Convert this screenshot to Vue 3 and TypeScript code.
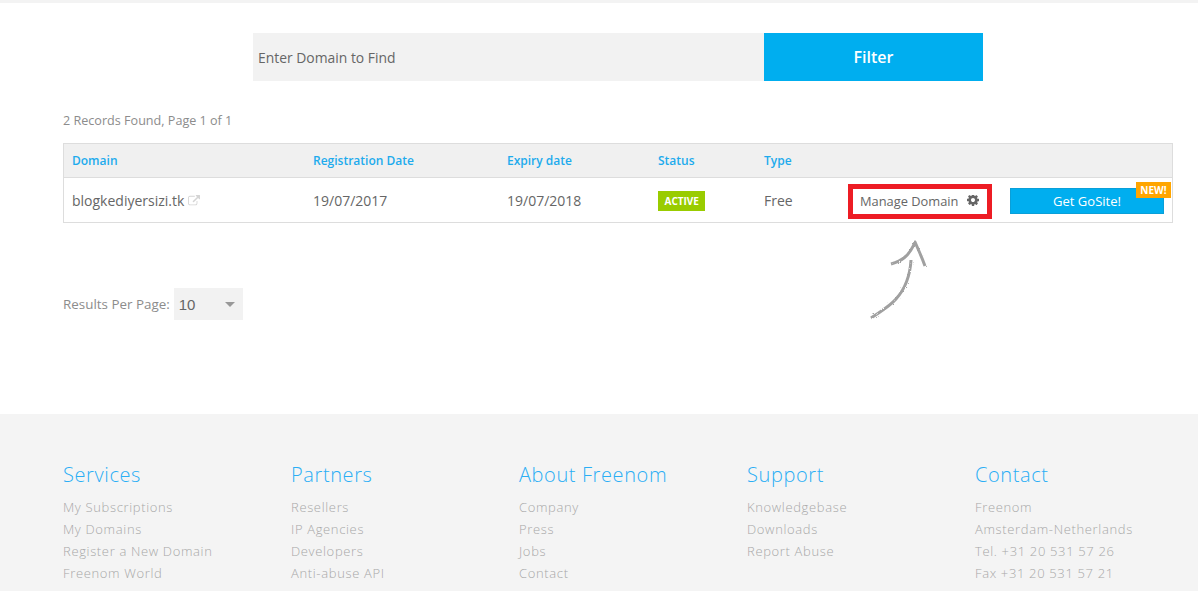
<script setup lang="ts">
interface FooterColumn { title: string; items: string[] }
const footer: FooterColumn[] = [
  { title: 'Services', items: ['My Subscriptions', 'My Domains', 'Register a New Domain', 'Freenom World'] },
  { title: 'Partners', items: ['Resellers', 'IP Agencies', 'Developers', 'Anti-abuse API'] },
  { title: 'About Freenom', items: ['Company', 'Press', 'Jobs', 'Contact'] },
  { title: 'Support', items: ['Knowledgebase', 'Downloads', 'Report Abuse'] },
  { title: 'Contact', items: ['Freenom', 'Amsterdam-Netherlands', 'Tel. +31 20 531 57 26', 'Fax +31 20 531 57 21'] },
]
const heads: string[] = ['Domain', 'Registration Date', 'Expiry date', 'Status', 'Type', '', '']
</script>

<template>
  <div class="page">
    <main class="main">
      <form class="search" @submit.prevent>
        <div class="search-input">Enter Domain to Find</div>
        <button class="search-btn" type="button">Filter</button>
      </form>
      <p class="records">2 Records Found, Page 1 of 1</p>
      <div class="table">
        <div class="row head">
          <div v-for="(h, i) in heads" :key="i" class="cell">{{ h }}</div>
        </div>
        <div class="row body">
          <div class="cell domain">
            blogkediyersizi.tk
            <svg class="ext" viewBox="0 0 1792 1792" aria-hidden="true"><path fill="#d4d4d4" d="M1408 928v320q0 119-84.5 203.5t-203.5 84.5h-832q-119 0-203.5-84.5t-84.5-203.5v-832q0-119 84.5-203.5t203.5-84.5h704q14 0 23 9t9 23v64q0 14-9 23t-23 9h-704q-66 0-113 47t-47 113v832q0 66 47 113t113 47h832q66 0 113-47t47-113v-320q0-14 9-23t23-9h64q14 0 23 9t9 23zm384-864v512q0 26-19 45t-45 19-45-19l-176-176-652 652q-10 10-23 10t-23-10l-114-114q-10-10-10-23t10-23l652-652-176-176q-19-19-19-45t19-45 45-19h512q26 0 45 19t19 45z"/></svg>
          </div>
          <div class="cell">19/07/2017</div>
          <div class="cell">19/07/2018</div>
          <div class="cell"><span class="active">ACTIVE</span></div>
          <div class="cell">Free</div>
          <div class="cell">
            <div class="manage">
              Manage Domain
              <svg class="gear" viewBox="0 0 1536 1536" aria-hidden="true"><path fill="#666" fill-rule="evenodd" d="M1024 640q0-106-75-181t-181-75-181 75-75 181 75 181 181 75 181-75 75-181zm512-109v222q0 12-8 23t-20 13l-185 28q-19 54-39 91 35 50 107 138 10 12 10 25t-9 23q-27 37-99 108t-94 71q-12 0-26-9l-138-108q-44 23-91 38-16 136-29 186-7 28-36 28h-222q-14 0-24.5-8.5t-11.5-21.5l-28-184q-49-16-90-37l-141 107q-10 9-25 9-14 0-25-11-126-114-165-168-7-10-7-23 0-12 8-23 15-21 51-66.5t54-70.5q-27-50-41-99l-183-27q-13-2-21-12.5t-8-23.5v-222q0-12 8-23t19-13l186-28q14-46 39-92-40-57-107-138-10-12-10-24 0-10 9-23 26-36 98.5-107.5t94.5-71.5q13 0 26 10l138 107q44-23 91-38 16-136 29-186 7-28 36-28h222q14 0 24.5 8.5t11.5 21.5l28 184q49 16 90 37l142-107q9-9 24-9 13 0 25 10 129 119 165 170 7 8 7 22 0 12-8 23-15 21-51 66.5t-54 70.5q26 50 41 98l183 28q13 2 21 12.5t8 23.5z"/></svg>
            </div>
          </div>
          <div class="cell">
            <div class="gosite">Get GoSite!</div>
            <span class="new">NEW!</span>
          </div>
        </div>
      </div>
      <div class="per-page">
        <span>Results Per Page:</span>
        <div class="select"><span>10</span><i class="caret"></i></div>
      </div>
      <svg class="arrow" viewBox="0 0 70 90" aria-hidden="true">
        <defs>
          <filter id="rough" x="-10%" y="-10%" width="120%" height="120%">
            <feTurbulence type="fractalNoise" baseFrequency="0.7" numOctaves="2" seed="4" result="n" />
            <feDisplacementMap in="SourceGraphic" in2="n" scale="2.4" />
          </filter>
        </defs>
        <g filter="url(#rough)" fill="none" stroke="#a0a0a0" stroke-width="3" stroke-linecap="butt" stroke-linejoin="round">
          <path d="M2 79 C 12 72 20 68 27 60 C 36 50 41 38 42 21" />
          <path d="M22 25 C 32 22 40 18 46 3 C 49 10 52 16 56 27" />
        </g>
      </svg>
    </main>
    <footer class="footer">
      <div v-for="col in footer" :key="col.title" class="col">
        <h3>{{ col.title }}</h3>
        <a v-for="item in col.items" :key="item">{{ item }}</a>
      </div>
    </footer>
  </div>
</template>

<style scoped>
.page { width: 1198px; height: 591px; overflow: hidden; font-family: "Open Sans", sans-serif; background: #fff; color: #666; }
.main { position: relative; border-top: 3px solid #f3f3f3; box-sizing: border-box; height: 414px; padding: 30px 25px 0 63px; }
.search { display: flex; width: 730px; height: 48px; margin-left: 190px; }
.search-input { flex: 0 0 511px; box-sizing: border-box; background: #f2f2f2; padding-left: 5px; font-size: 13.9px; line-height: 50px; color: #666; }
.search-btn { flex: 1; border: 0; background: #00aeef; color: #fff; font: 600 16px "Open Sans", sans-serif; padding: 0; }
.records { margin: 31px 0 0; font-size: 12.6px; line-height: 18px; color: #8c8c8c; height: 31px; }
.table { border: 1px solid #ddd; width: 1110px; box-sizing: border-box; }
.row { display: grid; grid-template-columns: 241px 194px 151px 106px 84px 162px 1fr; padding-left: 8px; align-items: center; }
.head { height: 33px; background: #f0f0f0; border-bottom: 1px solid #ddd; font-size: 12px; font-weight: 600; color: #1dabed; }
.body { position: relative; height: 44px; font-size: 14px; color: #666; }
.domain { display: flex; align-items: center; gap: 4px; }
.ext { width: 12px; height: 12px; margin-top: 2px; }
.active { display: inline-block; background: #99cc00; color: #fff; font-size: 10px; font-weight: 700; line-height: 20px; height: 20px; padding: 0 6.5px; vertical-align: middle; }
.manage { box-sizing: border-box; width: 144px; height: 35px; border: 5px solid #ed1c24; display: flex; align-items: center; gap: 9px; padding-left: 7px; font-size: 12.85px; color: #666; margin-top: 2px; }
.gear { width: 12px; height: 12px; }
.gosite { width: 154px; height: 26px; box-sizing: border-box; border: 1px solid #0a9fd8; background: #00aeef; color: #fff; font-size: 13px; font-weight: 500; line-height: 24px; text-align: center; margin-top: 1px; }
.new { position: absolute; top: 4px; right: 1px; width: 35px; height: 16px; background: #ffa500; color: #fff; font-size: 10px; font-weight: 700; line-height: 16px; text-align: center; }
.per-page { display: flex; align-items: center; gap: 4px; margin-top: 65px; font-size: 13.4px; color: #8c8c8c; }
.select { display: flex; align-items: center; justify-content: space-between; box-sizing: border-box; width: 69px; height: 32px; background: #f2f2f2; padding: 0 8px 0 5px; color: #666; font-family: "Liberation Sans", sans-serif; font-size: 15px; }
.caret { border-left: 5px solid transparent; border-right: 5px solid transparent; border-top: 5px solid #999; }
.arrow { position: absolute; left: 869px; top: 236px; width: 70px; height: 90px; }
.footer { display: grid; grid-template-columns: repeat(5, 228px); background: #f4f4f4; height: 177px; padding: 47px 0 0 63px; box-sizing: border-box; }
.col h3 { margin: 0 0 8px; font-size: 20px; font-weight: 300; line-height: 27px; letter-spacing: 0.6px; color: #2aaef5; }
.col a { display: block; font-size: 13px; font-weight: 300; line-height: 22px; letter-spacing: 0.65px; color: #a8a8a8; }
</style>
